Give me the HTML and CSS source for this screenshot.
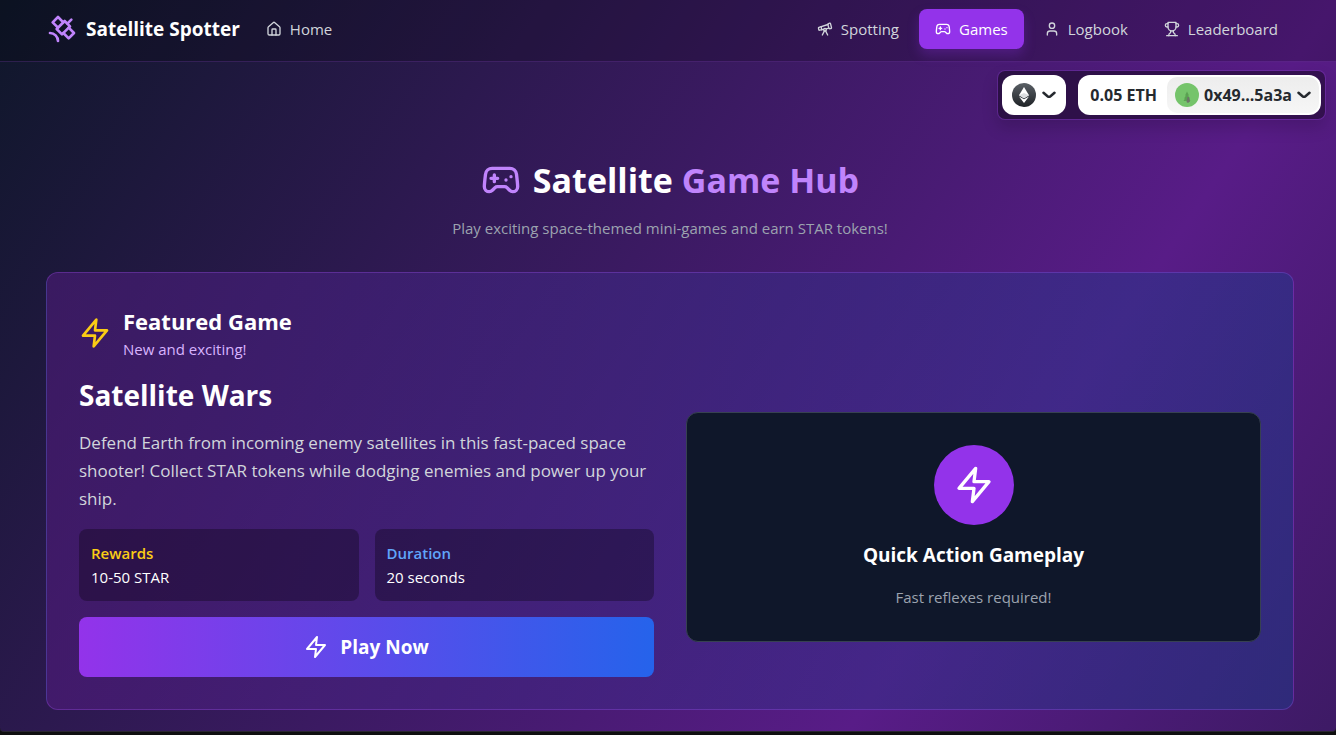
FILE: index.html
```html
<!DOCTYPE html>
<html lang="en">
<head>
  <meta charset="utf-8">
  <meta name="viewport" content="width=device-width, initial-scale=1.0">
  <title>Satellite Spotter</title>
  <link rel="stylesheet" href="styles.css">
</head>
<body>

  <!-- shared icons -->
  <svg class="sprite" aria-hidden="true">
    <symbol id="i-satellite" viewBox="0 0 24 24">
      <path d="M13 7 9 3 5 7l4 4"/><path d="m17 11 4 4-4 4-4-4"/><path d="m8 12 4 4 6-6-4-4Z"/><path d="m16 8 3-3"/><path d="M9 21a6 6 0 0 0-6-6"/>
    </symbol>
    <symbol id="i-home" viewBox="0 0 24 24">
      <path d="M15 21v-8a1 1 0 0 0-1-1h-4a1 1 0 0 0-1 1v8"/><path d="M3 10a2 2 0 0 1 .709-1.528l7-5.999a2 2 0 0 1 2.582 0l7 5.999A2 2 0 0 1 21 10v9a2 2 0 0 1-2 2H5a2 2 0 0 1-2-2z"/>
    </symbol>
    <symbol id="i-telescope" viewBox="0 0 24 24">
      <path d="m10.065 12.493-6.18 1.318a.934.934 0 0 1-1.108-.702l-.537-2.15a1.07 1.07 0 0 1 .691-1.265l13.504-4.44"/><path d="m13.56 11.747 4.332-.924"/><path d="m16 21-3.105-6.21"/><path d="M16.485 5.94a2 2 0 0 1 1.455-2.425l1.09-.272a1 1 0 0 1 1.212.727l1.515 6.06a1 1 0 0 1-.727 1.213l-1.09.272a2 2 0 0 1-2.425-1.455z"/><path d="m6.158 8.633 1.114 4.456"/><path d="m8 21 3.105-6.21"/><circle cx="12" cy="13" r="2"/>
    </symbol>
    <symbol id="i-gamepad" viewBox="0 0 24 24">
      <path d="M6 11h4M8 9v4M15 12h.01M18 10h.01"/><path d="M17.32 5H6.68a4 4 0 0 0-3.978 3.59c-.006.052-.01.101-.017.152C2.604 9.416 2 14.456 2 16a3 3 0 0 0 3 3c1 0 1.5-.5 2-1l1.414-1.414A2 2 0 0 1 9.828 16h4.344a2 2 0 0 1 1.414.586L17 18c.5.5 1 1 2 1a3 3 0 0 0 3-3c0-1.545-.604-6.584-.685-7.258-.007-.05-.011-.1-.017-.151A4 4 0 0 0 17.32 5z"/>
    </symbol>
    <symbol id="i-user" viewBox="0 0 24 24">
      <path d="M19 21v-2a4 4 0 0 0-4-4H9a4 4 0 0 0-4 4v2"/><circle cx="12" cy="7" r="4"/>
    </symbol>
    <symbol id="i-trophy" viewBox="0 0 24 24">
      <path d="M6 9H4.500a2.500 2.500 0 0 1 0-5H6"/><path d="M18 9h1.500a2.500 2.500 0 0 0 0-5H18"/><path d="M4 22h16"/><path d="M10 14.660V17c0 .550-.470.980-.970 1.210C7.850 18.750 7 20.240 7 22"/><path d="M14 14.660V17c0 .550.470.980.970 1.210C16.150 18.750 17 20.240 17 22"/><path d="M18 2H6v7a6 6 0 0 0 12 0V2Z"/>
    </symbol>
    <symbol id="i-zap" viewBox="0 0 24 24">
      <path d="M13 2 3 14h9l-1 8 10-12h-9l1-8z"/>
    </symbol>
    <symbol id="i-chevron" viewBox="0 0 14 8">
      <path d="M1.500 1.700 5.500 5.200q1.500 1.200 3 0l4-3.500"/>
    </symbol>
  </svg>

  <div class="page">
    <header class="nav">
      <div class="container nav-row">
        <a class="brand" href="#">
          <svg class="icon icon-lg"><use href="#i-satellite"/></svg>
          Satellite Spotter
        </a>
        <a class="nav-link" href="#"><svg class="icon"><use href="#i-home"/></svg>Home</a>
        <nav class="nav-right">
          <a class="nav-link" href="#"><svg class="icon"><use href="#i-telescope"/></svg>Spotting</a>
          <a class="nav-link active" href="#"><svg class="icon"><use href="#i-gamepad"/></svg>Games</a>
          <a class="nav-link" href="#"><svg class="icon"><use href="#i-user"/></svg>Logbook</a>
          <a class="nav-link" href="#"><svg class="icon"><use href="#i-trophy"/></svg>Leaderboard</a>
        </nav>
      </div>
    </header>

    <div class="wallet">
      <button class="wallet-btn chain" type="button" aria-label="Ethereum">
        <svg class="coin" viewBox="0 0 24 24">
          <defs>
            <linearGradient id="coin-bg" x1="0" y1="0" x2="0" y2="1">
              <stop offset="0" stop-color="#5a6066"/>
              <stop offset="1" stop-color="#1e2226"/>
            </linearGradient>
          </defs>
          <circle cx="12" cy="12" r="12" fill="url(#coin-bg)"/>
          <path d="M12 4 7 12.300 12 15.200 17 12.300z" fill="#fff"/>
          <path d="M7 13.400 12 20l5-6.600-5 2.900z" fill="#fff"/>
          <path d="M12 10 7 12.300l5 2.900 5-2.900z" fill="#dcdee0"/>
        </svg>
        <svg class="chevron"><use href="#i-chevron"/></svg>
      </button>
      <button class="wallet-btn account" type="button">
        <span class="balance">0.05 ETH</span>
        <span class="address">
          <svg class="coin" viewBox="0 0 24 24">
            <circle cx="12" cy="12" r="12" fill="#75c46b"/>
            <path d="M12 8.500 10 12.500h1L9 15.500h1l-1.500 2.500h7L14 15.500h1L13 12.500h1z" fill="#5aa152"/>
            <path d="M12.500 14h1.500l1 4.500-2 1.500-1.500-1z" fill="#6d7468"/>
          </svg>
          0x49...5a3a
          <svg class="chevron"><use href="#i-chevron"/></svg>
        </span>
      </button>
    </div>

    <main class="container">
      <section class="hero">
        <h1><svg class="icon icon-xl"><use href="#i-gamepad"/></svg><span>Satellite <em>Game Hub</em></span></h1>
        <p>Play exciting space-themed mini-games and earn STAR tokens!</p>
      </section>

      <section class="featured">
        <div class="featured-head">
          <svg class="icon icon-lg"><use href="#i-zap"/></svg>
          <div>
            <h2>Featured Game</h2>
            <p>New and exciting!</p>
          </div>
        </div>

        <div class="featured-body">
          <div class="info">
            <h3>Satellite Wars</h3>
            <p class="desc">Defend Earth from incoming enemy satellites in this fast-paced space shooter! Collect STAR tokens while dodging enemies and power up your ship.</p>
            <div class="stats">
              <div class="stat">
                <div class="stat-name rewards">Rewards</div>
                <div>10-50 STAR</div>
              </div>
              <div class="stat">
                <div class="stat-name duration">Duration</div>
                <div>20 seconds</div>
              </div>
            </div>
            <button class="play" type="button"><svg class="icon icon-md"><use href="#i-zap"/></svg>Play Now</button>
          </div>

          <div class="preview">
            <div class="bolt"><svg class="icon icon-xl"><use href="#i-zap"/></svg></div>
            <h4>Quick Action Gameplay</h4>
            <p>Fast reflexes required!</p>
          </div>
        </div>
      </section>
    </main>
  </div>

</body>
</html>
```
FILE: styles.css
```css
* {
  box-sizing: border-box;
  margin: 0;
}

body {
  min-height: 100vh;
  padding-bottom: 3px;
  background: #0f0f10;
  color: #fff;
  font-family: "Open Sans", "Noto Sans", sans-serif;
  font-size: 15px;
  line-height: 24px;
}

a {
  color: inherit;
  text-decoration: none;
}

button {
  border: 0;
  font: inherit;
  color: inherit;
  cursor: pointer;
}

.sprite {
  display: none;
}

.page {
  position: relative;
  min-height: calc(100vh - 3px);
  padding-left: 4px;
  border-bottom: 1px solid #2a2730;
  border-radius: 0 0 4px 4px;
  /* the gradient runs on below the fold */
  background: linear-gradient(to bottom right, #0f172a, #581c87, #0f172a) 0 0 / 100% 2000px no-repeat;
}

.container {
  max-width: 1332px;
  margin: 0 auto;
  padding: 0 42px;
}

/* icons */
.icon {
  width: 16px;
  height: 16px;
  flex: none;
  fill: none;
  stroke: currentColor;
  stroke-width: 2;
  stroke-linecap: round;
  stroke-linejoin: round;
}
.icon-md { width: 24px; height: 24px; }
.icon-lg { width: 32px; height: 32px; }
.icon-xl { width: 40px; height: 40px; }

/* nav */
.nav {
  margin-left: -4px;
  padding-left: 4px;
  background: rgba(0, 0, 0, 0.2);
  border-bottom: 1px solid rgba(168, 85, 247, 0.2);
}

.nav-row {
  display: flex;
  align-items: center;
  gap: 10px;
  padding-top: 9px;
  padding-bottom: 12px;
}

.brand {
  display: flex;
  align-items: center;
  gap: 8px;
  font-size: 19px;
  font-weight: 700;
}
.brand .icon { color: #c084fc; }

.nav-link {
  display: flex;
  align-items: center;
  gap: 8px;
  padding: 8px 16px;
  border-radius: 8px;
  color: #d1d5db;
}
.nav-link.active {
  background: #9333ea;
  color: #fff;
  box-shadow: 0 6px 12px rgba(147, 51, 234, 0.25);
}

.nav-right {
  display: flex;
  gap: 4px;
  margin-left: auto;
}

/* wallet bar floats over the page */
.wallet {
  position: absolute;
  top: 70px;
  right: 10px;
  display: flex;
  gap: 12px;
  padding: 4px;
  border: 1px solid rgba(168, 85, 247, 0.2);
  border-radius: 8px;
  background: rgba(0, 0, 0, 0.4) padding-box;
  box-shadow: 0 8px 16px rgba(0, 0, 0, 0.15);
}

.wallet-btn {
  display: flex;
  align-items: center;
  height: 40px;
  border-radius: 12px;
  background: #fff;
  color: #25292e;
  font-size: 16px;
  font-weight: 700;
}

.chain {
  gap: 6px;
  padding: 0 10px;
}

.account { padding: 0 2px 0 12px; }

.address {
  display: flex;
  align-items: center;
  gap: 5px;
  height: 36px;
  margin-left: 10px;
  padding: 0 8px;
  border-radius: 10px;
  background: linear-gradient(#ededed, #f6f6f6);
}

.coin {
  width: 24px;
  height: 24px;
}

.chevron {
  width: 14px;
  height: 8px;
  fill: none;
  stroke: #25292e;
  stroke-width: 2.5;
  stroke-linecap: round;
}

/* hero */
.hero {
  padding: 98px 0 32px;
  text-align: center;
}
.hero h1 {
  display: flex;
  justify-content: center;
  align-items: center;
  gap: 12px;
  margin-bottom: 16px;
  font-size: 34px;
  line-height: 40px;
}
.hero h1 .icon,
.hero em {
  color: #c084fc;
  font-style: normal;
}
.hero p { color: #9ca3af; }

/* featured game */
.featured {
  padding: 32px;
  border: 1px solid rgba(168, 85, 247, 0.3);
  border-radius: 12px;
  background: linear-gradient(to right, rgba(88, 28, 135, 0.5), rgba(30, 58, 138, 0.5));
}

.featured-head {
  display: flex;
  align-items: center;
  gap: 12px;
  margin-bottom: 16px;
}
.featured-head .icon { color: #facc15; }
.featured-head h2 {
  font-size: 22px;
  line-height: 32px;
}
.featured-head p { color: #d8b4fe; }

.featured-body {
  display: grid;
  grid-template-columns: 1fr 1fr;
  align-items: center;
  gap: 32px;
}

.info {
  display: grid;
  gap: 16px;
}
.info h3 {
  font-size: 28px;
  line-height: 36px;
}

.desc {
  color: #d1d5db;
  font-size: 17px;
  line-height: 28px;
}

.stats {
  display: grid;
  grid-template-columns: 1fr 1fr;
  gap: 16px;
}
.stat {
  padding: 12px;
  border-radius: 8px;
  background: rgba(0, 0, 0, 0.3);
}
.stat-name { font-weight: 600; }
.rewards { color: #facc15; }
.duration { color: #60a5fa; }

.play {
  display: flex;
  justify-content: center;
  align-items: center;
  gap: 12px;
  padding: 16px;
  border-radius: 8px;
  background: linear-gradient(to right, #9333ea, #2563eb);
  font-size: 19px;
  line-height: 28px;
  font-weight: 700;
}

.preview {
  display: grid;
  justify-items: center;
  gap: 16px;
  padding: 32px;
  border: 1px solid #374151;
  border-radius: 12px;
  background: #0f172a;
}
.preview h4 {
  font-size: 19px;
  line-height: 28px;
}
.preview p { color: #9ca3af; }

.bolt {
  display: grid;
  place-items: center;
  width: 80px;
  height: 80px;
  border-radius: 50%;
  background: #9333ea;
}
```
